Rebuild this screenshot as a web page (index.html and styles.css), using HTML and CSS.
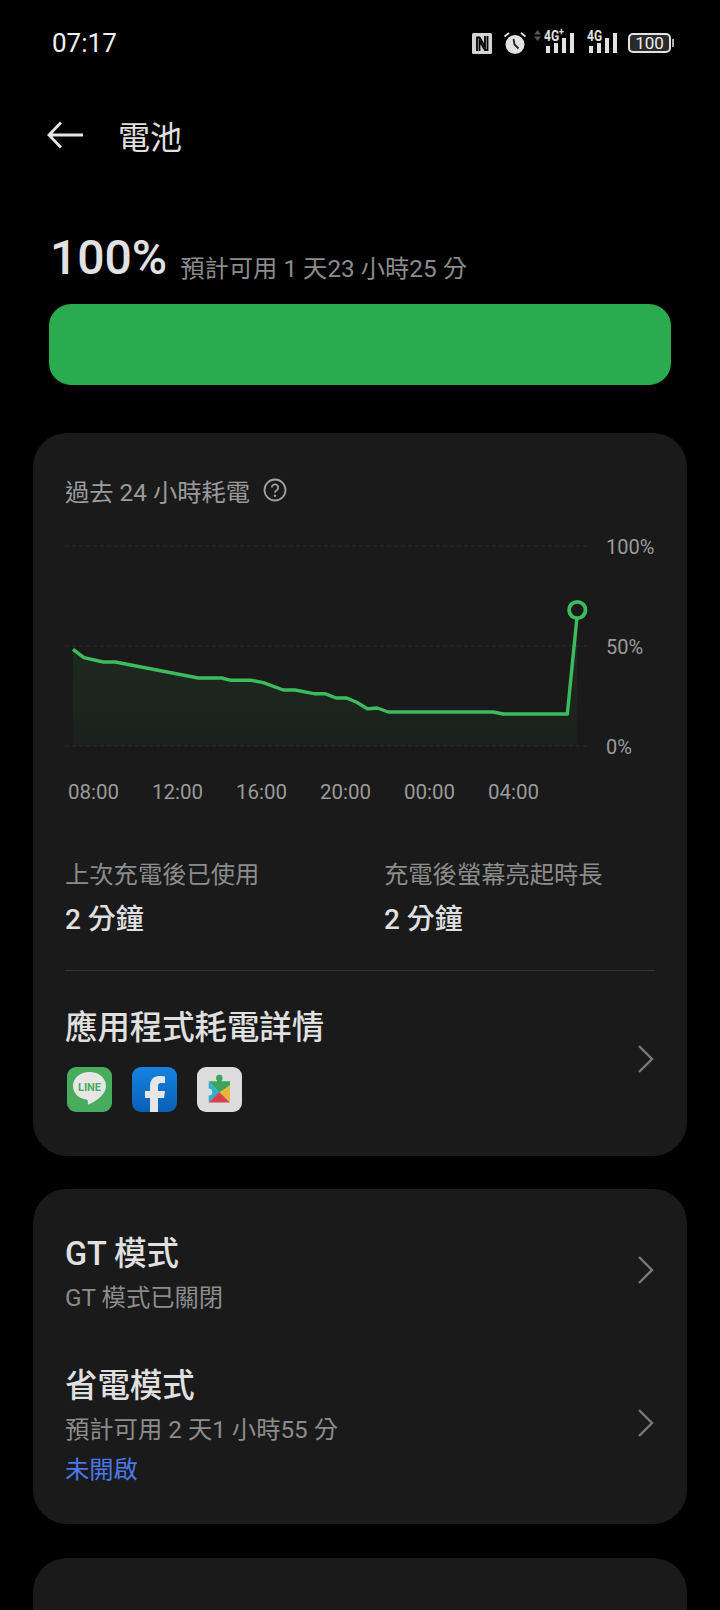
FILE: index.html
```html
<!DOCTYPE html>
<html lang="zh-Hant">

<head>
  <meta charset="UTF-8">
  <title>電池</title>
  <link rel="stylesheet" href="styles.css">
</head>

<body>
  <div class="status-bar">
    <div class="status-time">07:17</div>
    <div class="status-icons">
      <!-- NFC -->
      <svg width="20" height="21" viewBox="0 0 20 21">
        <rect width="20" height="21" rx="1.500" fill="#d4d4d4" />
        <path d="M5 18V4.500h2.500l5.500 9V3" fill="none" stroke="#000" stroke-width="1.800" />
        <path d="M15.500 3v14H13L7.500 8v10" fill="none" stroke="#000" stroke-width="1.800" />
      </svg>
      <!-- alarm -->
      <svg class="icon-alarm" width="22" height="22" viewBox="0 0 22 22">
        <circle cx="11" cy="12.500" r="9.500" fill="#e2e2e2" />
        <path d="M9.500 7l1 5.500 4 4" fill="none" stroke="#222" stroke-width="1.800" />
        <path d="M.5 4.500L5 1M21.500 4.500L17 1" fill="none" stroke="#e2e2e2" stroke-width="1.800" />
      </svg>
      <!-- signal 1 -->
      <div class="signal signal-first">
        <svg class="signal-arrows" width="7" height="11" viewBox="0 0 7 11">
          <path d="M3.500 0L7 4.500H0zM3.500 11L7 6.500H0z" fill="#555" />
        </svg>
        <span class="signal-label">4G<sup>+</sup></span>
        <svg width="28" height="20" viewBox="0 0 28 20">
          <rect y="13" width="4" height="7" fill="#e2e2e2" />
          <rect x="8" y="10" width="4" height="10" fill="#e2e2e2" />
          <rect x="16" y="5" width="4" height="15" fill="#e2e2e2" />
          <rect x="24" width="4" height="20" fill="#e2e2e2" />
        </svg>
      </div>
      <!-- signal 2 -->
      <div class="signal">
        <span class="signal-label">4G</span>
        <svg width="28" height="20" viewBox="0 0 28 20">
          <rect y="13" width="4" height="7" fill="#e2e2e2" />
          <rect x="8" y="10" width="4" height="10" fill="#e2e2e2" />
          <rect x="16" y="5" width="4" height="15" fill="#e2e2e2" />
          <rect x="24" width="4" height="20" fill="#e2e2e2" />
        </svg>
      </div>
      <div class="status-battery">
        <div class="status-battery-body">100</div>
        <div class="status-battery-cap"></div>
      </div>
    </div>
  </div>

  <div class="title-bar">
    <svg class="back" width="38" height="30" viewBox="0 0 38 30">
      <path d="M37 15H3M15 2.500L3 15l12 12.500" fill="none" stroke="#e6e6e6" stroke-width="2.800" />
    </svg>
    <div class="title">電池</div>
  </div>

  <div class="battery-summary">
    <span class="battery-percent">100%</span>
    <span class="battery-estimate">預計可用 1 天23 小時25 分</span>
  </div>
  <div class="battery-bar"></div>

  <div class="card card-usage">
    <div class="chart-title">
      <span>過去 24 小時耗電</span>
      <svg width="24" height="24" viewBox="0 0 24 24">
        <circle cx="12" cy="12" r="10.500" fill="none" stroke="#a0a0a0" stroke-width="1.800" />
        <path d="M8.800 9.500a3.200 3.200 0 1 1 4.800 2.800c-1.100.7-1.600 1.200-1.600 2.400" fill="none" stroke="#a0a0a0" stroke-width="1.800" />
        <circle cx="12" cy="17.800" r="1.200" fill="#a0a0a0" />
      </svg>
    </div>

    <svg class="chart" width="622" height="226" viewBox="65 540 622 226">
      <defs>
        <linearGradient id="fade" x1="0" y1="0" x2="0" y2="1">
          <stop offset="0" stop-color="#2fae50" stop-opacity="0.14" />
          <stop offset="1" stop-color="#2fae50" stop-opacity="0.04" />
        </linearGradient>
      </defs>
      <path d="M65 546H587M65 646H587M65 746H587" stroke="#2b2b2b" stroke-width="1" stroke-dasharray="4 3" fill="none" />
      <path d="M73 649.300L84 657.700 103.300 662 115.300 662 198.300 678 221.700 678 231 680.300 251.700 680.300 263.300 682.700 283.300 690 295 690 314 693.700 325 693.700 336 698 346.700 698 356.700 702.300 367.300 708.700 377.300 708 388.300 712 493.300 712 503.300 714 567.300 714 577.300 610V746H73Z" fill="url(#fade)" />
      <path d="M73 649.300L84 657.700 103.300 662 115.300 662 198.300 678 221.700 678 231 680.300 251.700 680.300 263.300 682.700 283.300 690 295 690 314 693.700 325 693.700 336 698 346.700 698 356.700 702.300 367.300 708.700 377.300 708 388.300 712 493.300 712 503.300 714 567.300 714 577.300 614" fill="none" stroke="#3dbb5f" stroke-width="3.400" stroke-linejoin="round" />
      <circle cx="577.300" cy="610" r="8.200" fill="#1a1a1a" stroke="#3dbb5f" stroke-width="3.800" />
      <text class="chart-y" x="606" y="554">100%</text>
      <text class="chart-y" x="606" y="654">50%</text>
      <text class="chart-y" x="606" y="754">0%</text>
    </svg>

    <div class="chart-times">
      <span>08:00</span>
      <span>12:00</span>
      <span>16:00</span>
      <span>20:00</span>
      <span>00:00</span>
      <span>04:00</span>
    </div>

    <div class="stats">
      <div class="stat">
        <div class="stat-name">上次充電後已使用</div>
        <div class="stat-value">2 分鐘</div>
      </div>
      <div class="stat">
        <div class="stat-name">充電後螢幕亮起時長</div>
        <div class="stat-value">2 分鐘</div>
      </div>
    </div>

    <div class="app-row">
      <div class="row-main">
        <div class="row-title">應用程式耗電詳情</div>
        <div class="app-icons">
          <!-- LINE -->
          <svg width="45" height="45" viewBox="0 0 45 45">
            <rect width="45" height="45" rx="9" fill="#47ad5c" />
            <path d="M22.500 5C13 5 6 11 6 19c0 7 5.500 12.500 13.500 13.500 1.500.3 1.500 2 1.300 4-.1 1 .5 1.300 1.500.8C28 34.500 39 28 39 19c0-8-7-14-16.500-14z" fill="#e6e6e6" />
            <text class="line-text" x="22.500" y="23.500">LINE</text>
          </svg>
          <!-- Facebook -->
          <svg width="45" height="45" viewBox="0 0 45 45">
            <defs>
              <linearGradient id="fb" x1="0" y1="0" x2="0" y2="1">
                <stop offset="0" stop-color="#1583de" />
                <stop offset="1" stop-color="#0a5fb8" />
              </linearGradient>
            </defs>
            <rect width="45" height="45" rx="9" fill="url(#fb)" />
            <path d="M18 45V31h-5v-7h5v-5c0-6 3.500-10 9-10 2.500 0 4.500.3 6 .5v6.500h-3.500c-3 0-3.500 1.500-3.500 3.500V24h7l-1 7h-6v14z" fill="#e6e6e6" />
          </svg>
          <!-- Play services -->
          <svg width="45" height="45" viewBox="0 0 45 45">
            <rect width="45" height="45" rx="9" fill="#dcdcdc" />
            <circle cx="22.300" cy="11" r="3.200" fill="#3ba55d" />
            <path d="M20 11h4.600v3.300H33V20L22.300 25.500 11.700 14.300H20z" fill="#3ba55d" />
            <path d="M11.700 14.300L22.300 25.500 11.700 35.500z" fill="#2fb0cf" />
            <circle cx="11.700" cy="25" r="3.600" fill="#dcdcdc" />
            <path d="M33 18v17L22.300 25.500z" fill="#e6b93a" />
            <path d="M22.300 25l10.700 10.500H11.700z" fill="#d8434a" />
          </svg>
        </div>
      </div>
      <svg class="chevron" width="18" height="30" viewBox="0 0 18 30">
        <path d="M2 2l13 13L2 28" fill="none" stroke="#7a7a7a" stroke-width="2.400" />
      </svg>
    </div>
  </div>

  <div class="card card-modes">
    <div class="mode-row mode-gt">
      <div class="row-main">
        <div class="row-title">GT 模式</div>
        <div class="mode-sub">GT 模式已關閉</div>
      </div>
      <svg class="chevron" width="18" height="30" viewBox="0 0 18 30">
        <path d="M2 2l13 13L2 28" fill="none" stroke="#7a7a7a" stroke-width="2.400" />
      </svg>
    </div>
    <div class="mode-row mode-save">
      <div class="row-main">
        <div class="row-title">省電模式</div>
        <div class="mode-sub">預計可用 2 天1 小時55 分</div>
        <div class="mode-state">未開啟</div>
      </div>
      <svg class="chevron" width="18" height="30" viewBox="0 0 18 30">
        <path d="M2 2l13 13L2 28" fill="none" stroke="#7a7a7a" stroke-width="2.400" />
      </svg>
    </div>
  </div>

  <div class="card card-last"></div>
</body>

</html>
```

FILE: styles.css
```css
html,
body {
  margin: 0;
  padding: 0;
}

body {
  width: 720px;
  height: 1610px;
  overflow: hidden;
  background-color: #000;
  color: #e0e0e0;
  font-family: Roboto, "Noto Sans CJK TC", sans-serif;
}

.status-bar {
  display: flex;
  align-items: center;
  justify-content: space-between;
  height: 86px;
  padding: 0 46px 0 52px;
}

.status-time {
  font-size: 26px;
  color: #f0f0f0;
}

.status-icons {
  display: flex;
  align-items: center;
}

.icon-alarm {
  margin-left: 12px;
}

.signal {
  position: relative;
  display: flex;
  margin-left: 15px;
}

.signal-first {
  margin-left: 20px;
}

.signal-label {
  position: absolute;
  top: -4px;
  left: -2px;
  color: #e2e2e2;
  font-size: 15px;
  font-weight: 700;
  line-height: 15px;
  transform: scaleX(0.8);
  transform-origin: left;
}

.signal-label sup {
  font-size: 11px;
  line-height: 0;
}

.signal-arrows {
  position: absolute;
  top: -3px;
  left: -12px;
}

.status-battery {
  display: flex;
  align-items: center;
  margin-left: 11px;
}

.status-battery-body {
  box-sizing: border-box;
  width: 43px;
  height: 20px;
  border: 2px solid #e2e2e2;
  border-radius: 5px;
  background-color: #2b2b2b;
  color: #eee;
  font-size: 17px;
  line-height: 16px;
  text-align: center;
}

.status-battery-cap {
  width: 2px;
  height: 8px;
  margin-left: 1px;
  background-color: #aaa;
}

.title-bar {
  display: flex;
  align-items: center;
  height: 50px;
  margin-top: 20px;
  padding: 4px 0 0 46px;
}

.back {
  margin-right: 34px;
}

.title {
  font-size: 32px;
}

.battery-summary {
  display: flex;
  align-items: flex-end;
  height: 56px;
  margin-top: 70px;
  padding-left: 50px;
}

.battery-percent {
  font-size: 48px;
  font-weight: 500;
  line-height: 56px;
  color: #e2e2e2;
}

.battery-estimate {
  margin-left: 13px;
  font-size: 24.300px;
  line-height: 34px;
  color: #8c8c8c;
}

.battery-bar {
  height: 81px;
  margin: 18px 49px 0;
  border-radius: 22px;
  background-color: #2bab4f;
}

.card {
  margin: 0 33px;
  border-radius: 34px;
  background-color: #1a1a1a;
}

.card-usage {
  box-sizing: border-box;
  height: 723px;
  margin-top: 48px;
  padding: 41px 32px 0;
}

.chart-title {
  display: flex;
  align-items: center;
  height: 32px;
  color: #9a9a9a;
  font-size: 24.300px;
}

.chart-title svg {
  margin-left: 13px;
}

.chart {
  display: block;
  margin-top: 34px;
  overflow: visible;
}

.chart-y {
  fill: #9a9a9a;
  font-size: 20px;
  font-family: Roboto, sans-serif;
}

.chart-times {
  display: flex;
  margin-top: 14px;
  padding-left: 3px;
  color: #9a9a9a;
  font-size: 20.500px;
}

.chart-times span {
  width: 84px;
}

.stats {
  display: grid;
  grid-template-columns: 319px 1fr;
  margin-top: 54px;
}

.stat-name {
  color: #8c8c8c;
  font-size: 24.300px;
  line-height: 34px;
}

.stat-value {
  margin-top: 9px;
  font-size: 28px;
  font-weight: 500;
  line-height: 38px;
  color: #e0e0e0;
}

.app-row {
  display: flex;
  align-items: center;
  justify-content: space-between;
  margin-top: 31px;
  padding-top: 35px;
  border-top: 1px solid #333;
}

.row-title {
  font-size: 32.400px;
  font-weight: 500;
  line-height: 44px;
  color: #e0e0e0;
}

.app-icons {
  display: flex;
  gap: 20px;
  margin-top: 17px;
  padding-left: 2px;
}

.line-text {
  fill: #47ad5c;
  font-size: 11px;
  font-weight: 700;
  text-anchor: middle;
}

.chevron {
  display: block;
}

.card-modes {
  box-sizing: border-box;
  height: 335px;
  margin-top: 33px;
  padding: 43px 32px 0;
}

.mode-row {
  display: flex;
  align-items: center;
  justify-content: space-between;
}

.mode-gt .chevron {
  margin-bottom: 8px;
}

.mode-save {
  margin-top: 48px;
}

.mode-save .chevron {
  margin-bottom: 6px;
}

.mode-sub {
  margin-top: 4px;
  color: #8c8c8c;
  font-size: 24.300px;
  line-height: 36px;
}

.mode-state {
  margin-top: 4px;
  color: #4a78e8;
  font-size: 24.300px;
  line-height: 36px;
}

.card-last {
  height: 120px;
  margin-top: 34px;
}
```
